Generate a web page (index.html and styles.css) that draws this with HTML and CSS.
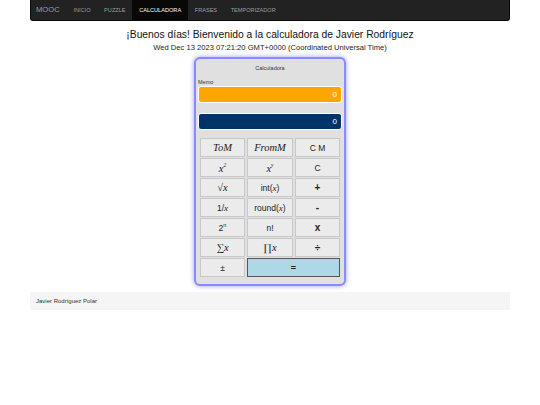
FILE: index.html
```html
<!DOCTYPE html>
<html lang="es">
<head>
<meta charset="utf-8">
<title>Calculadora</title>
<link rel="stylesheet" href="styles.css">
</head>
<body>
<div class="navbar">
  <span class="brand">MOOC</span>
  <ul class="nav">
    <li>INICIO</li>
    <li>PUZZLE</li>
    <li class="active">CALCULADORA</li>
    <li>FRASES</li>
    <li>TEMPORIZADOR</li>
  </ul>
</div>

<div class="saludo">
  <h1>¡Buenos días! Bienvenido a la calculadora de Javier Rodríguez</h1>
  <p>Wed Dec 13 2023 07:21:20 GMT+0000 (Coordinated Universal Time)</p>
</div>

<div class="calc">
  <div class="calc_title">Calculadora</div>
  <div class="memo_label">Memo</div>
  <div class="screen memo">0</div>
  <div class="screen main">0</div>
  <div class="keys">
    <button class="math">ToM</button>
    <button class="math">FromM</button>
    <button>C M</button>
    <button class="math">x<sup>2</sup></button>
    <button class="math">x<sup>y</sup></button>
    <button>C</button>
    <button class="math">√x</button>
    <button>int(<i class="math">x</i>)</button>
    <button class="op">+</button>
    <button>1/<i class="math">x</i></button>
    <button>round(<i class="math">x</i>)</button>
    <button class="op">-</button>
    <button>2<sup>n</sup></button>
    <button>n!</button>
    <button class="op">x</button>
    <button class="math">∑x</button>
    <button class="math">∏x</button>
    <button class="op">÷</button>
    <button>±</button>
    <button class="equal">=</button>
  </div>
</div>

<div class="footer">Javier Rodríguez Polar</div>
</body>
</html>
```

FILE: styles.css
```css
*{ padding:0; margin:0; box-sizing:border-box; }
body{ font-family:"Liberation Sans", Arial, sans-serif; color:#333; background:#fff; }

.navbar{ width:480px; height:21px; margin:0 auto; background:#222; border:1px solid #080808; border-top:none; border-radius:0 0 3px 3px; display:flex; align-items:stretch; }
.brand{ color:#9d9d9d; font-size:7.6px; line-height:20px; padding:0 7px 0 5px; }
.nav{ list-style:none; display:flex; }
.nav li{ color:#9d9d9d; font-size:5.6px; line-height:20px; padding:0 6.8px; }
.nav li.active{ background:#080808; color:#fff; }

.saludo{ text-align:center; margin-top:7px; }
.saludo h1{ font-weight:normal; font-size:10.3px; line-height:14px; color:#111; }
.saludo p{ font-size:7.6px; line-height:11px; color:#222; }

.calc{ width:152px; margin:4px auto 0; background:#e0e0e0; border:2px solid #8a8aff; border-radius:6px; box-shadow:0 0 5px #9a9aff; padding:4px 2px 7px; }
.calc_title{ text-align:center; font-size:5.5px; color:#333; line-height:10px; }
.memo_label{ font-size:5.5px; color:#333; line-height:8px; margin-top:5px; }
.screen{ height:17px; border:1px solid #fff; border-radius:3px; color:#fff; text-align:right; font-size:8px; line-height:15px; padding-right:4px; }
.screen.memo{ background:#ffa500; }
.screen.main{ background:#003366; margin-top:10px; }

.keys{ display:grid; grid-template-columns:45px 46px 45px; gap:1px 2px; margin:8px 0 0 2px; }
.keys button{ height:19px; background:#ebebeb; border:1px solid #c8c8c8; font-family:"Liberation Sans", Arial, sans-serif; font-size:8.5px; color:#222; }
.keys .math, .keys i.math{ font-family:"Liberation Serif", "Times New Roman", serif; font-style:italic; font-size:10.5px; }
.keys i.math{ font-size:9px; }
.keys sup{ font-size:5.5px; }
.keys .op{ font-weight:bold; font-size:10px; }
.keys .equal{ grid-column:span 2; background:#add8e6; border:1px solid #555; font-weight:bold; font-size:9px; }

.footer{ width:480px; margin:6px auto 0; background:#f5f5f5; height:18px; line-height:18px; padding-left:6px; font-size:6px; color:#333; }
```
